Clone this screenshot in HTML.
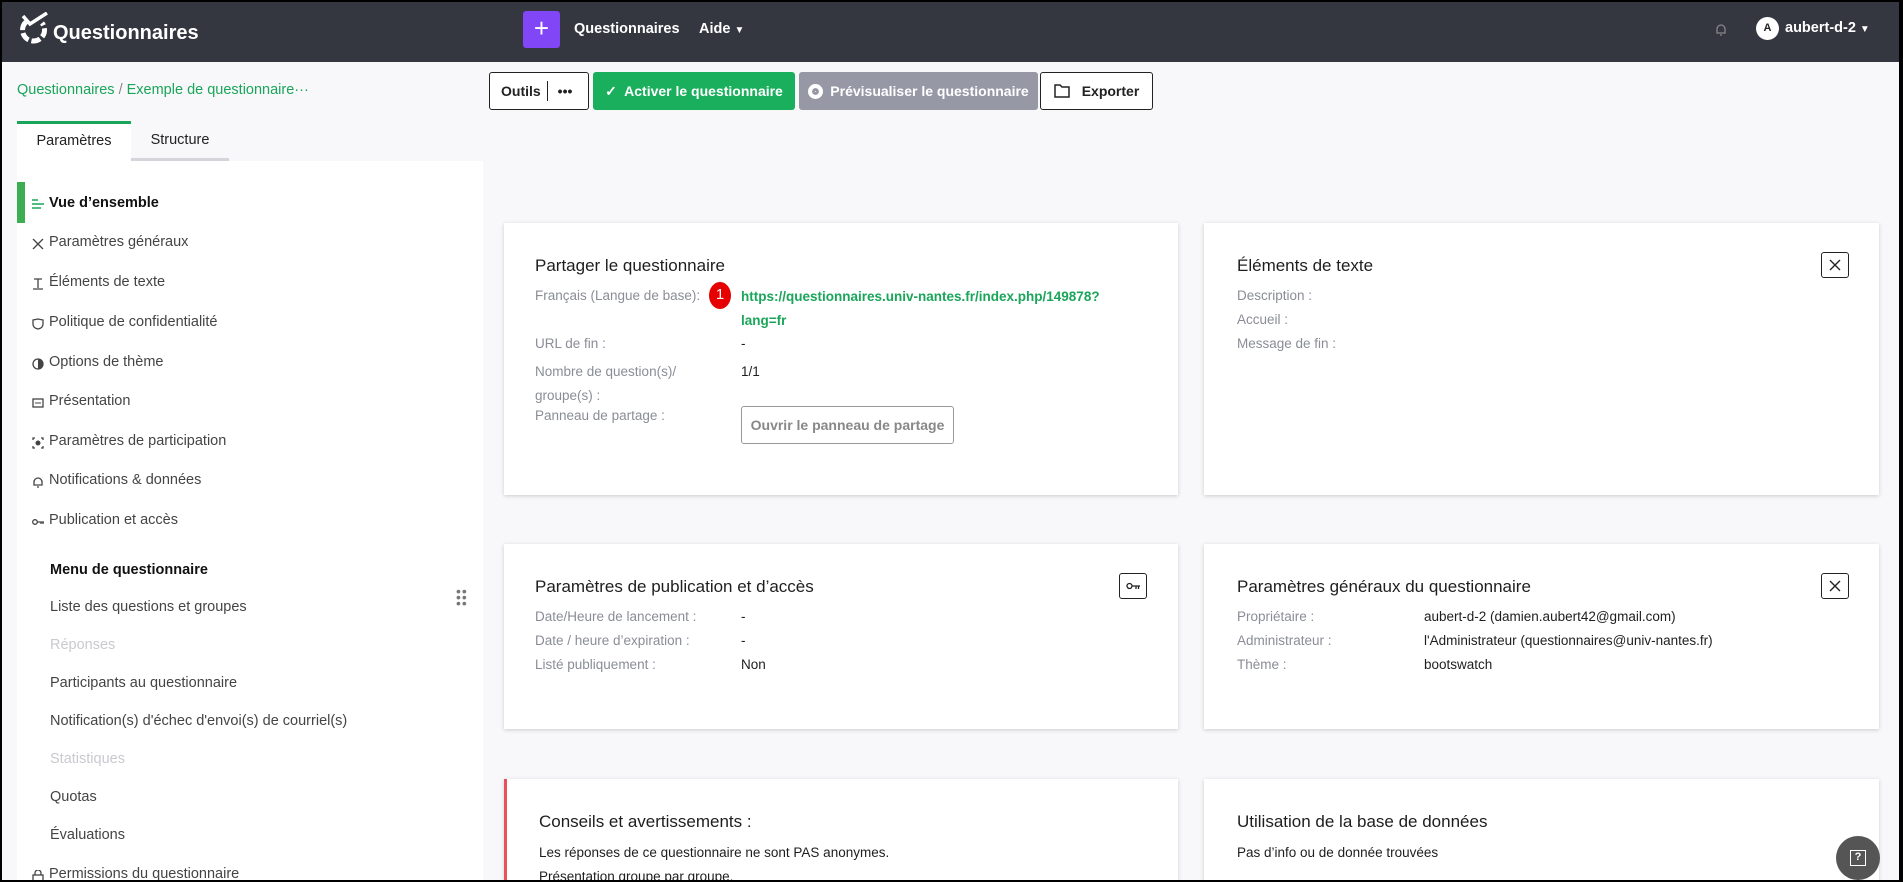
<!DOCTYPE html>
<html><head><meta charset="utf-8"><style>
*{box-sizing:border-box;margin:0;padding:0}
html,body{width:1903px;height:882px;overflow:hidden;background:#000;font-family:"Liberation Sans",sans-serif}
#f{position:absolute;left:2px;top:2px;width:1897px;height:878px;background:#f8f8fa;overflow:hidden}
.a{position:absolute;white-space:nowrap}
.hd{position:absolute;left:-2px;top:-2px;width:1903px;height:62px;background:#343640}
.btn{position:absolute;top:70px;height:38px;border-radius:3px;font-size:14px;font-weight:bold;display:flex;align-items:center;justify-content:center}
.card{position:absolute;background:#fff;box-shadow:0 1px 4px rgba(0,0,0,.18)}
.ct{position:absolute;font-size:17px;color:#1e1e1e}
.lb{position:absolute;font-size:13.5px;color:#8a8d96;white-space:nowrap}
.vl{position:absolute;font-size:13.5px;color:#1e1e1e;white-space:nowrap}
.si{position:absolute;left:47px;font-size:14.5px;color:#444;white-space:nowrap}
.ic{position:absolute;left:30px;width:12px;height:12px}
.sm{position:absolute;left:48px;font-size:14.5px;color:#444;white-space:nowrap}
.ib{position:absolute;width:28px;height:26px;border:1.5px solid #222;border-radius:3px;display:flex;align-items:center;justify-content:center}
</style></head><body><div id="f">
<div class="hd">
<svg class="a" style="left:17px;top:12px" width="34" height="34" viewBox="0 0 34 34"><path d="M9 10 A11 11 0 1 0 25 11" fill="none" stroke="#fff" stroke-width="5" stroke-dasharray="9 3"/><path d="M6 4 L13 12 L30 1" fill="none" stroke="#fff" stroke-width="3.5"/></svg>
<div class="a" style="left:53px;top:22px;color:#fff;font-size:20px;font-weight:bold">Questionnaires</div>
<div class="a" style="left:523px;top:11px;width:37px;height:37px;background:#8146f6;border-radius:3px;color:#fff;font-size:26px;text-align:center;line-height:35px">+</div>
<div class="a" style="left:574px;top:21px;color:#fff;font-size:14.5px;font-weight:bold">Questionnaires</div>
<div class="a" style="left:699px;top:21px;color:#fff;font-size:14.5px;font-weight:bold">Aide <span style="font-size:10px">▼</span></div>
<svg class="a" style="left:1714px;top:22px" width="14" height="16" viewBox="0 0 14 16"><path d="M3 11 V7 A4 4 0 0 1 11 7 V11 Z M6 13 H8" fill="none" stroke="#888" stroke-width="1.3"/></svg>
<div class="a" style="left:1756px;top:17px;width:23px;height:23px;border-radius:50%;background:#fff;color:#222;font-size:11px;font-weight:bold;text-align:center;line-height:23px">A</div>
<div class="a" style="left:1785px;top:20px;color:#fff;font-size:14.5px;font-weight:bold">aubert-d-2 <span style="font-size:10px">▼</span></div>
</div>
<div class="a" style="left:15px;top:80px;font-size:14.5px;color:#1aa55a">Questionnaires <span style="color:#888">/</span> Exemple de questionnaire···</div>
<div class="btn" style="left:487px;width:100px;background:#fff;border:1px solid #222;color:#222;justify-content:flex-start;padding-left:11px">Outils<span style="display:inline-block;width:1px;height:20px;background:#222;margin:0 10px 0 6px"></span>•••</div>
<div class="btn" style="left:591px;width:202px;background:#1aaf5d;color:#fff">✓&nbsp; Activer le questionnaire</div>
<div class="btn" style="left:797px;width:239px;background:#9698a6;color:#fff"><span style="display:inline-block;width:15px;height:15px;border-radius:50%;background:#fff;border:4px solid #fff;box-shadow:inset 0 0 0 3px #9698a6;margin-right:7px"></span>Prévisualiser le questionnaire</div>
<div class="btn" style="left:1038px;width:113px;background:#fff;border:1px solid #222;color:#222"><svg width="16" height="14" style="margin-right:12px"><path d="M1 1 H6 L8 3 H15 V13 H1 Z" fill="none" stroke="#222" stroke-width="1.5"/></svg>Exporter</div>
<div class="a" style="left:15px;top:119px;width:114px;height:40px;background:#fff;border-top:3px solid #1aa55a;font-size:14.5px;color:#222;text-align:center;line-height:35px">Paramètres</div>
<div class="a" style="left:129px;top:119px;width:98px;height:40px;border-bottom:3px solid #d4d5da;font-size:14.5px;color:#222;text-align:center;line-height:38px">Structure</div>
<div class="a" style="left:15px;top:159px;width:466px;height:719px;background:#fff"></div>
<div class="a" style="left:15px;top:180px;width:8px;height:41px;background:#3aae50"></div>
<svg class="ic" style="top:196px" viewBox="0 0 12 12"><path d="M0 2H6M0 6H12M0 10H9" stroke="#1aa55a" stroke-width="1.5"/></svg>
<div class="si" style="top:193px;font-weight:bold;color:#111">Vue d’ensemble</div>
<div class="si" style="top:232px">Paramètres généraux</div>
<div class="si" style="top:272px">Éléments de texte</div>
<div class="si" style="top:312px">Politique de confidentialité</div>
<div class="si" style="top:352px">Options de thème</div>
<div class="si" style="top:391px">Présentation</div>
<div class="si" style="top:431px">Paramètres de participation</div>
<div class="si" style="top:470px">Notifications &amp; données</div>
<div class="si" style="top:510px">Publication et accès</div>
<div class="si" style="top:864px">Permissions du questionnaire</div>
<svg class="ic" style="top:868px" viewBox="0 0 12 12"><rect x="1" y="5" width="10" height="7" fill="none" stroke="#444" stroke-width="1.3"/><path d="M3 5V3A3 3 0 0 1 9 3V5" fill="none" stroke="#444" stroke-width="1.3"/></svg>
<svg class="ic" style="top:236px" viewBox="0 0 12 12"><path d="M1 1L11 11M11 1L1 11" stroke="#444" stroke-width="1.3"/></svg>
<svg class="ic" style="top:276px" viewBox="0 0 12 12"><path d="M2 1H10M6 1V10M1 11H11" stroke="#444" stroke-width="1.3"/></svg>
<svg class="ic" style="top:316px" viewBox="0 0 12 12"><path d="M1 2L6 1L11 2V6Q11 10 6 11Q1 10 1 6Z" fill="none" stroke="#444" stroke-width="1.3"/></svg>
<svg class="ic" style="top:356px" viewBox="0 0 12 12"><circle cx="6" cy="6" r="5" fill="none" stroke="#444" stroke-width="1.3"/><path d="M6 1A5 5 0 0 1 6 11Z" fill="#444"/></svg>
<svg class="ic" style="top:395px" viewBox="0 0 12 12"><rect x="1" y="2" width="10" height="8" fill="none" stroke="#444" stroke-width="1.3"/><path d="M3 6H9" stroke="#444"/></svg>
<svg class="ic" style="top:435px" viewBox="0 0 12 12"><path d="M1 3V1H3M9 1H11V3M11 9V11H9M3 11H1V9" fill="none" stroke="#444" stroke-width="1.3"/><circle cx="6" cy="6" r="2.5" fill="#444"/></svg>
<svg class="ic" style="top:474px" viewBox="0 0 12 12"><path d="M2 9V6A4 4 0 0 1 10 6V9Z M5 11H7" fill="none" stroke="#444" stroke-width="1.3"/></svg>
<svg class="ic" style="top:514px" viewBox="0 0 12 12"><circle cx="3" cy="6" r="2.3" fill="none" stroke="#444" stroke-width="1.3"/><path d="M5 6H12M9 6V8M11 6V8" stroke="#444" stroke-width="1.3"/></svg>
<div class="sm" style="top:560px;font-weight:bold;color:#111">Menu de questionnaire</div>
<div class="sm" style="top:597px">Liste des questions et groupes</div>
<div class="sm" style="top:635px;color:#c9cacf">Réponses</div>
<div class="sm" style="top:673px">Participants au questionnaire</div>
<div class="sm" style="top:711px">Notification(s) d'échec d'envoi(s) de courriel(s)</div>
<div class="sm" style="top:749px;color:#c9cacf">Statistiques</div>
<div class="sm" style="top:787px">Quotas</div>
<div class="sm" style="top:825px">Évaluations</div>
<div class="a" style="left:454px;top:586px;font-size:14px;color:#777;line-height:6px;letter-spacing:1px">••<br>••<br>••</div>

<div class="card" style="left:502px;top:221px;width:674px;height:272px">
<div class="ct" style="left:31px;top:33px">Partager le questionnaire</div>
<div class="lb" style="left:31px;top:65px">Français (Langue de base):</div>
<div class="a" style="left:205px;top:59px;width:22px;height:27px;border-radius:50%;background:#e60000;color:#fff;font-size:15px;text-align:center;line-height:26px">1</div>
<div class="vl" style="left:237px;top:62px;color:#1aa55a;font-weight:bold;line-height:24px">https://questionnaires.univ-nantes.fr/index.php/149878?<br>lang=fr</div>
<div class="lb" style="left:31px;top:113px">URL de fin :</div><div class="vl" style="left:237px;top:113px">-</div>
<div class="lb" style="left:31px;top:137px;line-height:24px">Nombre de question(s)/<br>groupe(s) :</div><div class="vl" style="left:237px;top:137px;line-height:24px">1/1</div>
<div class="lb" style="left:31px;top:185px">Panneau de partage :</div>
<div class="a" style="left:237px;top:183px;width:213px;height:38px;border:1px solid #999;border-radius:3px;font-size:14px;font-weight:bold;color:#888;text-align:center;line-height:36px">Ouvrir le panneau de partage</div>
</div>
<div class="card" style="left:1202px;top:221px;width:675px;height:272px">
<div class="ct" style="left:33px;top:33px">Éléments de texte</div>
<div class="ib" style="left:617px;top:29px"><svg width="12" height="12"><path d="M1 1L11 11M11 1L1 11" stroke="#222" stroke-width="1.4"/></svg></div>
<div class="lb" style="left:33px;top:65px">Description :</div>
<div class="lb" style="left:33px;top:89px">Accueil :</div>
<div class="lb" style="left:33px;top:113px">Message de fin :</div>
</div>
<div class="card" style="left:502px;top:542px;width:674px;height:185px">
<div class="ct" style="left:31px;top:33px">Paramètres de publication et d’accès</div>
<div class="ib" style="left:615px;top:29px"><svg width="14" height="10"><circle cx="3.5" cy="5" r="2.5" fill="none" stroke="#222" stroke-width="1.3"/><path d="M6 5H14M10 5V8M12.5 5V8" stroke="#222" stroke-width="1.3"/></svg></div>
<div class="lb" style="left:31px;top:65px">Date/Heure de lancement :</div><div class="vl" style="left:237px;top:65px">-</div>
<div class="lb" style="left:31px;top:89px">Date / heure d’expiration :</div><div class="vl" style="left:237px;top:89px">-</div>
<div class="lb" style="left:31px;top:113px">Listé publiquement :</div><div class="vl" style="left:237px;top:113px">Non</div>
</div>
<div class="card" style="left:1202px;top:542px;width:675px;height:185px">
<div class="ct" style="left:33px;top:33px">Paramètres généraux du questionnaire</div>
<div class="ib" style="left:617px;top:29px"><svg width="12" height="12"><path d="M1 1L11 11M11 1L1 11" stroke="#222" stroke-width="1.4"/></svg></div>
<div class="lb" style="left:33px;top:65px">Propriétaire :</div><div class="vl" style="left:220px;top:65px">aubert-d-2 (damien.aubert42@gmail.com)</div>
<div class="lb" style="left:33px;top:89px">Administrateur :</div><div class="vl" style="left:220px;top:89px">l'Administrateur (questionnaires@univ-nantes.fr)</div>
<div class="lb" style="left:33px;top:113px">Thème :</div><div class="vl" style="left:220px;top:113px">bootswatch</div>
</div>
<div class="card" style="left:502px;top:777px;width:674px;height:110px;border-left:3px solid #e8505b">
<div class="ct" style="left:32px;top:33px">Conseils et avertissements :</div>
<div class="vl" style="left:32px;top:66px">Les réponses de ce questionnaire ne sont PAS anonymes.</div>
<div class="vl" style="left:32px;top:90px">Présentation groupe par groupe.</div>
</div>
<div class="card" style="left:1202px;top:777px;width:675px;height:110px">
<div class="ct" style="left:33px;top:33px">Utilisation de la base de données</div>
<div class="vl" style="left:33px;top:66px">Pas d’info ou de donnée trouvées</div>
</div>
<div class="a" style="left:1834px;top:834px;width:44px;height:44px;border-radius:50%;background:#555;display:flex;align-items:center;justify-content:center"><div style="width:16px;height:16px;border:1.5px solid #fff;color:#fff;font-size:11px;font-weight:bold;text-align:center;line-height:13px">?</div></div>
</div></body></html>
